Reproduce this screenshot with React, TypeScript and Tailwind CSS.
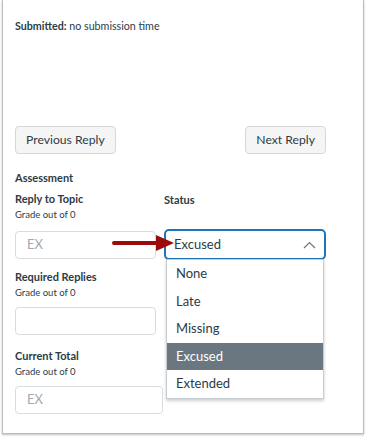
import React from 'react';

const options = ['None', 'Late', 'Missing', 'Excused', 'Extended'];

const Label: React.FC<{ title: string; sub?: boolean }> = ({ title, sub = true }) => (
  <div>
    <div className="h-[14px] text-[11px] font-bold leading-[14px]">{title}</div>
    {sub && <div className="mt-[2px] h-[14px] text-[9.5px] leading-[14px]">Grade out of 0</div>}
  </div>
);

const TextBox: React.FC<{ value?: string; className?: string }> = ({ value, className = '' }) => (
  <div
    className={`flex h-[28px] items-center rounded-[4px] border border-[#d8dcdf] bg-white px-[11px] text-[13px] text-[#a4a9ad] ${className}`}
  >
    {value}
  </div>
);

const App: React.FC = () => {
  return (
    <div
      className="h-[437px] w-[366px] overflow-hidden bg-white text-[#2d3b45]"
      style={{ fontFamily: 'Lato, "Open Sans", sans-serif' }}
    >
      <div className="relative ml-[2px] h-[434px] w-[362px] border-x border-b border-[#b9bdc0] pl-[12px] pr-[36px] pt-[19px] shadow-[0_1px_2px_rgba(0,0,0,0.25)]">
        <div className="h-[14px] text-[10.7px] leading-[14px]">
          <span className="font-bold">Submitted:</span> no submission time
        </div>

        <div className="mt-[93px] flex justify-between pr-[1px]">
          <button className="h-[28px] rounded-[4px] border border-[#d4d8db] bg-[#f5f5f5] px-[10px] text-[12.2px] text-[#2d3b45]">
            Previous Reply
          </button>
          <button className="h-[28px] rounded-[4px] border border-[#d4d8db] bg-[#f5f5f5] px-[10px] text-[12.2px] text-[#2d3b45]">
            Next Reply
          </button>
        </div>

        <div className="mt-[17px] h-[14px] text-[11px] font-bold leading-[14px]">Assessment</div>

        <div className="mt-[7px] grid grid-cols-[141px_162px] gap-x-[8px]">
          <div className="flex flex-col">
            <Label title="Reply to Topic" />
            <TextBox value="EX" className="mt-[9px]" />
            <div className="mt-[11px]">
              <Label title="Required Replies" />
            </div>
            <TextBox className="mt-[7px]" />
            <div className="mt-[14px]">
              <Label title="Current Total" />
            </div>
            <TextBox value="EX" className="mt-[7px] w-[148px]" />
          </div>

          <div className="relative flex flex-col">
            <div className="mt-[1px] h-[14px] text-[11px] font-bold leading-[14px]">Status</div>
            <div className="mt-[22px] flex h-[31px] items-center justify-between rounded-[5px] border-2 border-[#1d74b9] bg-white pl-[8px] pr-[8px] text-[13px]">
              <span>Excused</span>
              <svg width="13" height="8" viewBox="0 0 13 8" fill="none">
                <path d="M1 7L6.5 1.5L12 7" stroke="#6b7780" strokeWidth="1.2" />
              </svg>
            </div>
            <div className="absolute left-[2px] top-[67px] w-[158px] border border-[#c7cdd1] bg-white shadow-[0_2px_3px_rgba(0,0,0,0.2)]">
              {options.map((o) => (
                <div
                  key={o}
                  className={`flex h-[27.5px] items-center px-[9px] text-[13px] ${
                    o === 'Excused' ? 'bg-[#6b7780] text-white' : ''
                  }`}
                >
                  {o}
                </div>
              ))}
            </div>
          </div>
        </div>

        <svg
          className="absolute left-[109px] top-[234px]"
          width="64"
          height="18"
          viewBox="0 0 64 18"
        >
          <path d="M2 9H46" stroke="#9b0b0b" strokeWidth="4" strokeLinecap="round" />
          <path d="M44 1L62 9L44 17Z" fill="#9b0b0b" />
        </svg>
      </div>
    </div>
  );
};

export default App;
